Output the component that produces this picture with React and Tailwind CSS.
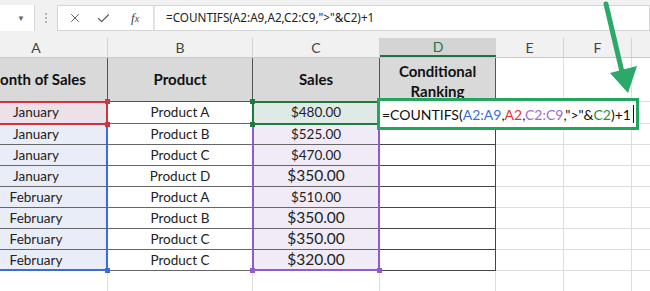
import React from 'react';
import { X, Check } from 'lucide-react';

const rows = [
  { month: 'January', product: 'Product A', sales: '$480.00', big: false, h: 'h-[22px]' },
  { month: 'January', product: 'Product B', sales: '$525.00', big: false, h: 'h-[21px]' },
  { month: 'January', product: 'Product C', sales: '$470.00', big: false, h: 'h-[21px]' },
  { month: 'January', product: 'Product D', sales: '$350.00', big: true, h: 'h-[21px]' },
  { month: 'February', product: 'Product A', sales: '$510.00', big: false, h: 'h-[21px]' },
  { month: 'February', product: 'Product B', sales: '$350.00', big: true, h: 'h-[21px]' },
  { month: 'February', product: 'Product C', sales: '$350.00', big: true, h: 'h-[21px]' },
  { month: 'February', product: 'Product C', sales: '$320.00', big: true, h: 'h-[21px]' },
];

const Handle = ({ className }) => (
  <span className={`absolute w-[5px] h-[5px] ${className}`} />
);

const FormulaText = () => (
  <span>
    =COUNTIFS(<span className="text-[#3b6fd6]">A2:A9</span>,
    <span className="text-[#e0323c]">A2</span>,
    <span className="text-[#9b6bd3]">C2:C9</span>,"&gt;"&amp;
    <span className="text-[#1f8f3e]">C2</span>)+1
  </span>
);

export default function App() {
  return (
    <div className="relative w-[650px] h-[291px] overflow-hidden bg-white font-['Lato',sans-serif] text-[#222]">
      {/* Formula bar */}
      <div className="h-[38px] bg-[#f1f1f1] flex items-start pt-[5px]">
        <div className="w-[35px] h-[26px] bg-white flex items-center justify-end pr-[9px] border-r border-[#d6d6d6]">
          <span className="text-[8px] text-[#666]">▼</span>
        </div>
        <div className="w-[22px] h-[26px] flex flex-col items-center justify-center gap-[2px]">
          <span className="w-[2px] h-[2px] bg-[#b5b5b5]" />
          <span className="w-[2px] h-[2px] bg-[#b5b5b5]" />
          <span className="w-[2px] h-[2px] bg-[#b5b5b5]" />
        </div>
        <div className="flex-1 h-[26px] bg-white border border-[#d6d6d6] flex items-center">
          <div className="w-[95px] flex items-center text-[#555]">
            <X size={14} strokeWidth={1.6} className="ml-[10px]" />
            <Check size={15} strokeWidth={1.8} className="ml-[14px]" />
            <span className="ml-[20px] font-['Liberation_Serif',serif] italic text-[13px] text-[#444]">
              f<span className="text-[10px]">x</span>
            </span>
          </div>
          <div className="w-[2px] h-full bg-[#e3e3e3]" />
          <div className="pl-[11px] font-['Noto_Sans',sans-serif] text-[11.7px] text-[#222] whitespace-nowrap">
            =COUNTIFS(A2:A9,A2,C2:C9,"&gt;"&amp;C2)+1
          </div>
        </div>
      </div>

      {/* Sheet */}
      <div className="-ml-[35px]">
        {/* Column letters */}
        <div className="flex h-[20px] bg-[#f1f1f1] border-b border-[#c9c9c9] text-[14px] text-[#444]">
          <div className="w-[143px] shrink-0 border-r border-[#d4d4d4] flex items-center justify-center">A</div>
          <div className="w-[145px] shrink-0 border-r border-[#d4d4d4] flex items-center justify-center">B</div>
          <div className="w-[127px] shrink-0 border-r border-[#d4d4d4] flex items-center justify-center">C</div>
          <div className="w-[116px] shrink-0 bg-[#d4d4d4] border-b-2 border-[#217346] text-[#217346] flex items-center justify-center">D</div>
          <div className="w-[68px] shrink-0 border-r border-[#d4d4d4] flex items-center justify-center">E</div>
          <div className="w-[68px] shrink-0 border-r border-[#d4d4d4] flex items-center justify-center">F</div>
          <div className="w-[60px] shrink-0" />
        </div>

        {/* Header row */}
        <div className="flex h-[44px] text-[15px] font-bold text-[#111]">
          <div className="w-[143px] shrink-0 bg-[#d9d9d9] border-r border-b border-[#555] flex items-center justify-center">Month of Sales</div>
          <div className="w-[145px] shrink-0 bg-[#d9d9d9] border-r border-b border-[#555] flex items-center justify-center">Product</div>
          <div className="w-[127px] shrink-0 bg-[#d9d9d9] border-r border-b border-[#555] flex items-center justify-center">Sales</div>
          <div className="w-[116px] shrink-0 bg-[#d9d9d9] border-r border-b border-[#555] flex flex-col items-center pt-[3px] leading-[20px]">
            <span>Conditional</span>
            <span>Ranking</span>
          </div>
          <div className="w-[68px] shrink-0 border-r border-b border-[#dedede]" />
          <div className="w-[68px] shrink-0 border-r border-b border-[#dedede]" />
          <div className="w-[60px] shrink-0 border-b border-[#dedede]" />
        </div>

        {/* Data rows */}
        {rows.map((r, i) => (
          <div key={i} className={`flex ${r.h} text-[13.5px] text-[#222]`}>
            <div
              className={`relative w-[143px] shrink-0 border-r border-b border-[#666] flex items-center justify-center ${
                i === 0 ? 'bg-[#ede1e9]' : 'bg-[#e9edf8]'
              }`}
            >
              {r.month}
              {i === 0 && (
                <>
                  <div className="absolute z-[5] left-0 right-[-1px] top-[-1px] h-[170px] border-2 border-[#3a6ddb]" />
                  <div className="absolute z-[6] left-0 right-[-1px] top-[-1px] h-[24px] border-2 border-[#d1343e]" />
                  <Handle className="z-[7] bg-[#d1343e] right-[-3px] top-[-3px]" />
                  <Handle className="z-[7] bg-[#d1343e] right-[-3px] top-[20px]" />
                  <Handle className="z-[7] bg-[#3a6ddb] right-[-3px] top-[166px]" />
                </>
              )}
            </div>
            <div className="w-[145px] shrink-0 border-r border-b border-[#666] bg-white flex items-center justify-center">
              {r.product}
            </div>
            <div
              className={`relative w-[127px] shrink-0 border-r border-b border-[#666] flex items-center justify-center ${
                i === 0 ? 'bg-[#dfe9e6]' : 'bg-[#f0ebf7]'
              } ${r.big ? 'text-[15.5px]' : 'text-[13.5px]'}`}
            >
              {r.sales}
              {i === 0 && (
                <>
                  <div className="absolute z-[5] left-[-1px] right-[-1px] top-[-1px] h-[170px] border-2 border-[#8f5cd0]" />
                  <div className="absolute z-[6] left-[-1px] right-[-1px] top-[-1px] h-[24px] border-2 border-[#217a3c]" />
                  <Handle className="z-[7] bg-[#217a3c] left-[-3px] top-[-3px]" />
                  <Handle className="z-[7] bg-[#217a3c] left-[-3px] top-[20px]" />
                  <Handle className="z-[7] bg-[#8f5cd0] left-[-3px] top-[166px]" />
                  <Handle className="z-[7] bg-[#8f5cd0] right-[-3px] top-[166px]" />
                </>
              )}
            </div>
            <div className="relative w-[116px] shrink-0 border-r border-b border-[#444] bg-white">
              {i === 0 && (
                <div className="absolute z-10 left-[-3px] top-[-4px] w-[262px] h-[32px] border-[3px] border-[#22a55c] bg-white flex items-center pl-[2px] text-[14px] text-[#111] whitespace-nowrap">
                  <FormulaText />
                  <span className="ml-[2px] w-px h-[18px] bg-[#111]" />
                </div>
              )}
            </div>
            <div className="w-[68px] shrink-0 border-r border-b border-[#dedede]" />
            <div className="w-[68px] shrink-0 border-r border-b border-[#dedede]" />
            <div className="w-[60px] shrink-0 border-b border-[#dedede]" />
          </div>
        ))}

        {/* Empty row 10 */}
        <div className="flex h-[24px]">
          <div className="w-[143px] shrink-0 border-r border-[#dedede]" />
          <div className="w-[145px] shrink-0 border-r border-[#dedede]" />
          <div className="w-[127px] shrink-0 border-r border-[#dedede]" />
          <div className="w-[116px] shrink-0 border-r border-[#dedede]" />
          <div className="w-[68px] shrink-0 border-r border-[#dedede]" />
          <div className="w-[68px] shrink-0 border-r border-[#dedede]" />
        </div>
      </div>

      {/* Arrow */}
      <svg className="absolute left-0 top-0 z-20 pointer-events-none" width="650" height="291" viewBox="0 0 650 291">
        <line x1="606" y1="4" x2="622" y2="72" stroke="#2aaa66" strokeWidth="5" strokeLinecap="round" />
        <polygon points="610,73 637,66 628,93" fill="#2aaa66" />
      </svg>
    </div>
  );
}
